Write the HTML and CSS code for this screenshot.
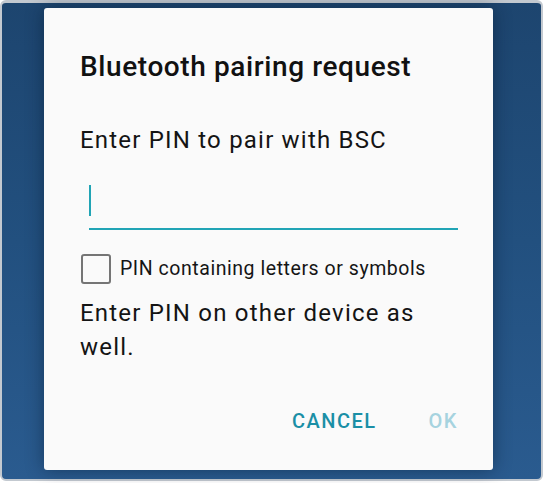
FILE: index.html
```html
<!DOCTYPE html>
<html>
<head>
<meta charset="utf-8">
<link rel="stylesheet" href="styles.css">
</head>
<body>
<div class="frame">
  <div class="dialog">
    <h1 class="title">Bluetooth pairing request</h1>
    <p class="prompt">Enter PIN to pair with BSC</p>
    <div class="field"><span class="cursor"></span></div>
    <label class="check"><span class="box"></span><span class="check-label">PIN containing letters or symbols</span></label>
    <p class="note">Enter PIN on other device as well.</p>
    <div class="actions">
      <span class="btn btn-cancel">CANCEL</span>
      <span class="btn btn-ok">OK</span>
    </div>
  </div>
</div>
</body>
</html>
```
FILE: styles.css
```css
html, body {
  margin: 0;
  padding: 0;
  background: #ffffff;
}
body {
  width: 544px;
  height: 483px;
  font-family: Roboto, "Noto Sans", sans-serif;
}
.frame {
  box-sizing: border-box;
  width: 543px;
  height: 481px;
  border: 2px solid #c3c9d0;
  border-top-width: 3px;
  border-radius: 6px;
  background: linear-gradient(180deg, #1d456f 0%, #22507f 50%, #2a5b8f 100%);
  padding: 5px 0 0 42px;
}
.dialog {
  box-sizing: border-box;
  width: 449px;
  height: 462px;
  background: #fafafa;
  border-radius: 3px;
  box-shadow: 0 0 18px rgba(5, 20, 40, 0.45);
  padding: 42px 35px 0 36px;
  display: flex;
  flex-direction: column;
}
.title {
  margin: 0;
  font-size: 28px;
  font-weight: 500;
  letter-spacing: 0.6px;
  line-height: 34px;
  color: #111111;
}
.prompt {
  margin: 41px 0 0;
  font-size: 24px;
  font-weight: 400;
  letter-spacing: 1.2px;
  line-height: 30px;
  color: #141414;
}
.field {
  margin: 30px 0 0 9px;
  height: 43px;
  border-bottom: 2px solid #21a4b5;
  display: flex;
  align-items: flex-start;
}
.cursor {
  display: block;
  width: 2px;
  height: 31px;
  background: #21a4b5;
}
.check {
  margin-top: 24px;
  display: flex;
  align-items: center;
  gap: 9px;
}
.box {
  box-sizing: border-box;
  width: 30px;
  height: 30px;
  margin-left: 1px;
  border: 2px solid #757575;
  border-radius: 3px;
  background: #fafafa;
}
.check-label {
  font-size: 19.5px;
  letter-spacing: 0.55px;
  line-height: 30px;
  color: #151515;
}
.note {
  margin: 12px 0 0;
  font-size: 24px;
  letter-spacing: 1.2px;
  line-height: 34px;
  color: #141414;
}
.actions {
  margin-top: 43px;
  display: flex;
  justify-content: flex-end;
  gap: 52px;
}
.btn {
  font-size: 20px;
  font-weight: 500;
  letter-spacing: 1.5px;
  line-height: 28px;
}
.btn-cancel {
  color: #1a8fa6;
}
.btn-ok {
  color: #a6d3df;
}
```
